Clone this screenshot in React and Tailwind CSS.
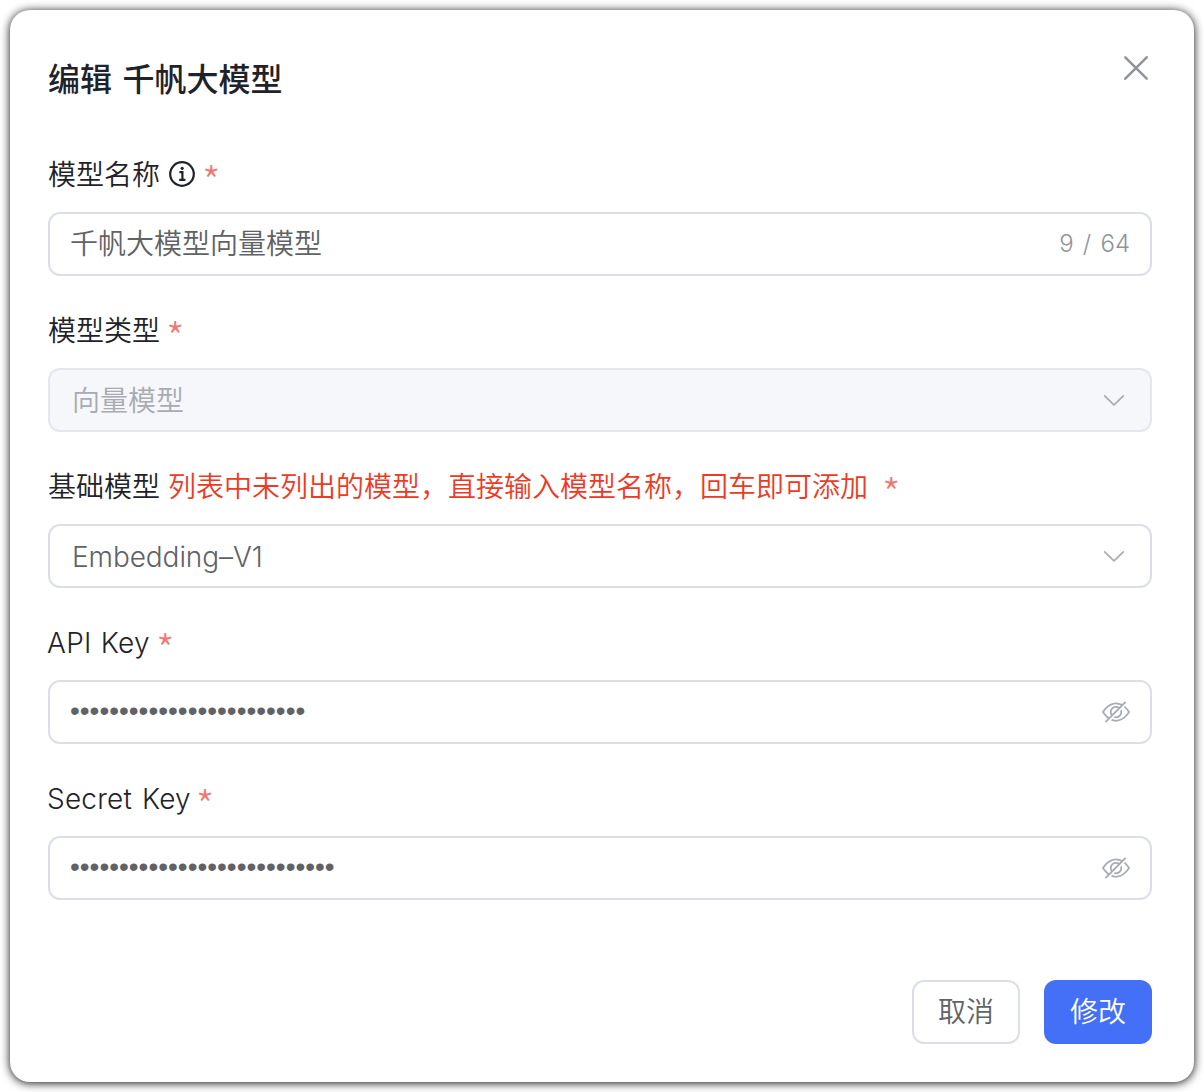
const cjk = "font-['Inter','Noto_Sans_CJK_SC',sans-serif]";

function Star({ className = '' }) {
  return (
    <span className={`h-[44px] w-[14px] font-['Noto_Sans_CJK_SC',sans-serif] text-[42px] leading-[56px] font-light text-[#f07872] ${className}`}>*</span>
  );
}

function ArrowDown() {
  return (
    <svg viewBox="0 0 1024 1024" className="mr-[2px] h-7 w-7 shrink-0 fill-[#a8abb2]">
      <path d="M831.872 340.864 512 652.672 192.128 340.864a30.592 30.592 0 0 0-42.752 0 29.12 29.12 0 0 0 0 41.6L489.664 714.24a32 32 0 0 0 44.672 0l340.288-331.712a29.12 29.12 0 0 0 0-41.728 30.592 30.592 0 0 0-42.752 0z" />
    </svg>
  );
}

function Hide() {
  return (
    <svg viewBox="0 0 1024 1024" className="h-7 w-7 shrink-0 fill-[#a8abb2]">
      <path d="M876.8 156.8c0-9.6-3.2-16-9.6-22.4-6.4-6.4-12.8-9.6-22.4-9.6-9.6 0-16 3.2-22.4 9.6L736 220.8c-64-32-137.6-51.2-224-60.8-160 16-288 73.6-377.6 176C44.8 438.4 0 496 0 512s48 73.6 134.4 176c22.4 25.6 44.8 48 73.6 67.2l-86.4 89.6c-6.4 6.4-9.6 12.8-9.6 22.4 0 9.6 3.2 16 9.6 22.4 6.4 6.4 12.8 9.6 22.4 9.6 9.6 0 16-3.2 22.4-9.6l704-710.4c3.2-6.4 6.4-12.8 6.4-22.4Zm-646.4 528c-76.8-70.4-128-128-153.6-172.8 28.8-48 80-105.6 153.6-172.8C304 272 400 230.4 512 224c64 3.2 124.8 19.2 176 44.8l-54.4 54.4C598.4 300.8 560 288 512 288c-64 0-115.2 22.4-160 64s-64 96-64 160c0 48 12.8 89.6 35.2 124.8L256 707.2c-9.6-6.4-19.2-16-25.6-22.4Zm140.8-96c-12.8-22.4-19.2-48-19.2-76.8 0-44.8 16-83.2 48-112 32-28.8 67.2-48 112-48 28.8 0 54.4 6.4 73.6 19.2L371.2 588.8ZM889.599 336c-12.8-16-28.8-28.8-41.6-41.6l-48 48c73.6 67.2 124.8 124.8 150.4 169.6-28.8 48-80 105.6-153.6 172.8-73.6 67.2-172.8 108.8-284.8 115.2-51.2-3.2-99.2-12.8-140.8-28.8l-48 48c57.6 22.4 118.4 38.4 188.8 44.8 160-16 288-73.6 377.6-176C979.199 585.6 1024 528 1024 512s-48.001-73.6-134.401-176Z" />
      <path d="M511.998 672c-12.8 0-25.6-3.2-38.4-6.4l-51.2 51.2c28.8 12.8 57.6 19.2 89.6 19.2 64 0 115.2-22.4 160-64 41.6-41.6 64-96 64-160 0-32-6.4-64-19.2-89.6l-51.2 51.2c3.2 12.8 6.4 25.6 6.4 38.4 0 44.8-16 83.2-48 112-32 28.8-67.2 48-112 48Z" />
    </svg>
  );
}

function Info() {
  return (
    <svg viewBox="0 0 28 28" className="ml-2 h-7 w-7 shrink-0" fill="none" stroke="#1f2329" strokeWidth="2.2">
      <circle cx="14" cy="14" r="11.8" />
      <path d="M11.4 12.1h3v7.6M11.2 19.8h6.2" strokeWidth="2.2" />
      <circle cx="14.2" cy="8.3" r="1.6" fill="#1f2329" stroke="none" />
    </svg>
  );
}

function Field({ label, children, disabled, input }) {
  return (
    <div className="mb-8 h-[124px]">
      <div className="flex h-11 items-center text-[28px] leading-[44px] font-[350] text-[#1f2329]">{label}</div>
      <div
        className={`mt-4 flex h-16 items-center justify-between rounded-xl border-2 pr-5 text-[28px] font-[350] ${
          input ? 'pl-5' : 'pl-[22px]'
        } ${disabled ? 'border-[#e4e7ed] bg-[#f5f7fa] text-[#a8abb2]' : 'border-[#dcdfe6] text-[#606266]'}`}
      >
        {children}
      </div>
    </div>
  );
}

export default function App() {
  return (
    <div className={`h-[1092px] w-[1204px] overflow-hidden bg-white p-[10px] ${cjk}`}>
      <div className="h-[1072px] rounded-[20px] bg-white pr-[42px] pl-[38px] shadow-[0_1px_10px_rgba(0,0,0,0.95)]">
        <div className="flex h-[142px] items-start justify-between">
          <h1 className="mt-[46px] text-[32px] leading-12 font-medium [word-spacing:2px] text-[#1f2329]">编辑 千帆大模型</h1>
          <svg viewBox="0 0 1024 1024" className="mt-[38px] -mr-1 h-10 w-10 fill-[#909399]">
            <path d="M764.288 214.592 512 466.88 259.712 214.592a31.936 31.936 0 0 0-45.12 45.12L466.752 512 214.528 764.224a31.936 31.936 0 1 0 45.12 45.184L512 557.184l252.288 252.288a31.936 31.936 0 0 0 45.12-45.12L557.12 512.064l252.288-252.352a31.936 31.936 0 1 0-45.12-45.12z" />
          </svg>
        </div>

        <Field input label={<><span className="pt-px">模型名称</span><Info /><Star className="ml-1.5" /></>}>
          <span>千帆大模型向量模型</span>
          <span className="text-2xl font-light [word-spacing:2.5px] text-[#909399]">9 / 64</span>
        </Field>
        <Field disabled label={<><span className="pt-px">模型类型</span><Star className="ml-1.5" /></>}>
          <span className="pt-0.5">向量模型</span>
          <ArrowDown />
        </Field>
        <Field
          label={<><span className="pt-px">基础模型</span><span className="ml-2 pt-px text-[#ee3a24]">列表中未列出的模型，直接输入模型名称，回车即可添加</span><Star className="ml-[14px]" /></>}
        >
          <span className="pt-0.5 tracking-[-0.003em]">Embedding–V1</span>
          <ArrowDown />
        </Field>
        <Field label={<><span className="-ml-px pt-px tracking-[0.01em] [word-spacing:1px]">API Key</span><Star className="ml-1.5" /></>} input>
          <span className="pb-0.5 font-['Liberation_Sans',sans-serif]">••••••••••••••••••••••••</span>
          <Hide />
        </Field>
        <Field label={<><span className="-ml-px pt-px tracking-[0.007em] [word-spacing:2px]">Secret Key</span><Star className="ml-[5px]" /></>} input>
          <span className="pb-0.5 font-['Liberation_Sans',sans-serif]">•••••••••••••••••••••••••••</span>
          <Hide />
        </Field>

        <div className="mt-20 flex justify-end gap-6 text-[28px] font-[350]">
          <button className="h-16 w-[108px] rounded-xl border-2 border-[#dcdfe6] text-[#606266]">取消</button>
          <button className="h-16 w-[108px] rounded-xl bg-[#4370f7] text-white">修改</button>
        </div>
      </div>
    </div>
  );
}
